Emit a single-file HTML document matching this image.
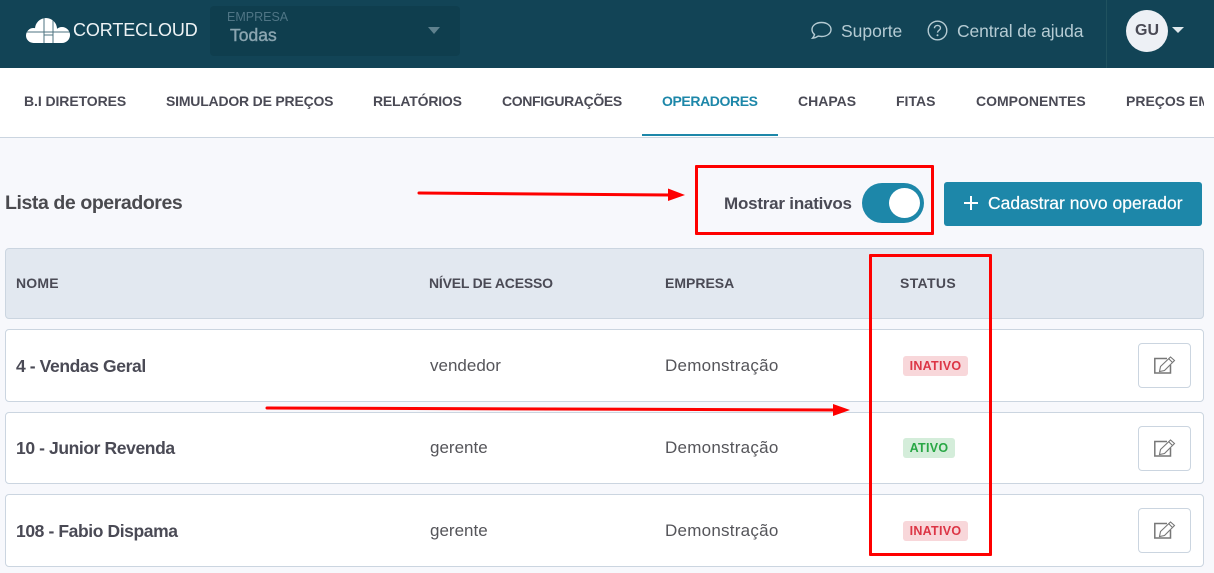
<!DOCTYPE html>
<html lang="pt-BR">
<head>
<meta charset="utf-8">
<title>Lista de operadores</title>
<style>
*{box-sizing:border-box}
html,body{margin:0;padding:0}
body{width:1214px;height:573px;position:relative;overflow:hidden;background:#f7f8fc;font-family:"Liberation Sans",sans-serif;color:#4a4a4f}
.a{position:absolute;white-space:nowrap;line-height:20px}
.b{font-weight:700}
.hdr{position:absolute;left:0;top:0;width:1214px;height:68px;background:#124456}
.nav{position:absolute;left:0;top:68px;width:1214px;height:70px;background:#fff;border-bottom:1px solid #cbd5e0;overflow:hidden}
.nv{position:absolute;top:23px;font-size:14px;font-weight:700;line-height:20px;white-space:nowrap;color:#4a4a55}
.row{position:absolute;left:5px;width:1199px;background:#fff;border:1px solid #cbd5e0;border-radius:4px}
.hd{position:absolute;left:5px;top:248px;width:1199px;height:71px;background:#e2e8f0;border:1px solid #cbd5e0;border-radius:4px}
.th{font-size:14px;font-weight:700;color:#4a4a55}
.nm{font-size:17.5px;font-weight:700;color:#4a4a55;letter-spacing:-.4px}
.td{font-size:17px;color:#55555a}
.dm{letter-spacing:.25px}
.badge{position:absolute;height:20px;border-radius:3px;font-size:12.5px;font-weight:700;line-height:20px;text-align:center;letter-spacing:.3px}
.in{background:#f8d7da;color:#dc3545;width:65px;left:903px}
.at{background:#d4edda;color:#28a745;width:52px;left:903px}
.edit{position:absolute;left:1138px;width:53px;height:45px;background:#fff;border:1px solid #cbd5e0;border-radius:4px}
.edit svg{position:absolute;left:15px;top:12px}
.rb{position:absolute;border:3px solid #fe0000;border-radius:1px}
</style>
</head>
<body>
<div class="hdr">
  <svg class="a" style="left:25px;top:17px" width="46" height="27" viewBox="0 0 46 27">
    <circle cx="8.500" cy="18.500" r="7.500" fill="#fff"/>
    <circle cx="21" cy="12" r="11" fill="#fff"/>
    <circle cx="37" cy="18" r="8" fill="#fff"/>
    <rect x="8.500" y="12" width="28.500" height="14" fill="#fff"/>
    <path d="M19 0V27M28 1V27M0 15H46M19 18H28" stroke="#124456" stroke-width="1" fill="none" opacity=".75"/>
  </svg>
  <div class="a" style="left:73px;top:20px;font-size:18px;color:#eef3f5;letter-spacing:-.1px">CORTECLOUD</div>
  <div class="a" style="left:210px;top:6px;width:250px;height:50px;background:#0f3e4e;border-radius:4px"></div>
  <div class="a" style="left:227px;top:7px;font-size:12.5px;color:#4f7585">EMPRESA</div>
  <div class="a" style="left:230px;top:25px;font-size:17.500px;color:#8aa5b0;-webkit-text-stroke:.4px #8aa5b0">Todas</div>
  <div class="a" style="left:428px;top:27px;width:0;height:0;border-left:6.500px solid transparent;border-right:6.500px solid transparent;border-top:7px solid #5f818e"></div>
  <svg class="a" style="left:810px;top:20px" width="23" height="21" viewBox="0 0 23 21"><path d="M11.500 2.500c5.500 0 9.500 3 9.500 7s-4 7-9.500 7c-1.200 0-2.300-.2-3.300-.4-1.400 1-3.200 2-5.700 2.100.9-1 1.800-2.300 2-3.800C3 13.200 2 11.500 2 9.500c0-4 4-7 9.500-7z" fill="none" stroke="#b5cbd3" stroke-width="1.400"/></svg>
  <div class="a" style="left:841px;top:21px;font-size:17.500px;color:#b5cbd3">Suporte</div>
  <svg class="a" style="left:927px;top:20px" width="21" height="21" viewBox="0 0 21 21"><circle cx="10.500" cy="10.500" r="9.300" fill="none" stroke="#b5cbd3" stroke-width="1.400"/><path d="M7.500 8.200c0-1.700 1.300-2.800 3-2.800s3 1.100 3 2.600c0 2.300-3 2.300-3 4.600" fill="none" stroke="#b5cbd3" stroke-width="1.400"/><circle cx="10.500" cy="15.300" r="1" fill="#b5cbd3"/></svg>
  <div class="a" style="left:957px;top:21px;font-size:17.500px;color:#b5cbd3;letter-spacing:-.13px">Central de ajuda</div>
  <div class="a" style="left:1106px;top:0;width:1px;height:68px;background:#20525f"></div>
  <div class="a" style="left:1126px;top:10px;width:42px;height:42px;border-radius:50%;background:#edf0f5;text-align:center;line-height:42px;font-size:16px;font-weight:700;color:#4a4a55">GU</div>
  <div class="a" style="left:1172px;top:27px;width:0;height:0;border-left:6px solid transparent;border-right:6px solid transparent;border-top:6px solid #dfe8ec"></div>
</div>

<div class="nav">
  <div class="nv" style="left:24px;letter-spacing:-.08px">B.I DIRETORES</div>
  <div class="nv" style="left:166px;letter-spacing:-.2px">SIMULADOR DE PREÇOS</div>
  <div class="nv" style="left:373px;letter-spacing:-.2px">RELATÓRIOS</div>
  <div class="nv" style="left:502px;letter-spacing:-.35px">CONFIGURAÇÕES</div>
  <div class="nv" style="left:662px;color:#1d87a9;letter-spacing:-.4px">OPERADORES</div>
  <div class="nv" style="left:798px">CHAPAS</div>
  <div class="nv" style="left:896px">FITAS</div>
  <div class="nv" style="left:976px">COMPONENTES</div>
  <div class="nv" style="left:1126px;width:78px;overflow:hidden">PREÇOS EM</div>
  <div class="a" style="left:642px;top:66px;width:136px;height:2px;background:#1d87a9"></div>
</div>

<div class="a b" style="left:5px;top:193px;font-size:19.500px;color:#4a4a4f;letter-spacing:-.42px">Lista de operadores</div>

<div class="a b" style="left:724px;top:194px;font-size:17px;color:#4a4a55;letter-spacing:-.22px">Mostrar inativos</div>
<div class="a" style="left:862px;top:183px;width:62px;height:40px;border-radius:20px;background:#1d87a9"></div>
<div class="a" style="left:889px;top:188px;width:31px;height:30px;border-radius:50%;background:#fff"></div>

<div class="a" style="left:944px;top:182px;width:258px;height:44px;background:#1d87a9;border-radius:3px"></div>
<svg class="a" style="left:963px;top:195px" width="16" height="16" viewBox="0 0 16 16"><path d="M8 1V15M1 8H15" stroke="#fff" stroke-width="2" fill="none"/></svg>
<div class="a" style="left:988px;top:193px;font-size:17.500px;color:#fff;-webkit-text-stroke:.2px #fff">Cadastrar novo operador</div>

<div class="hd"></div>
<div class="a th" style="left:16px;top:273px;letter-spacing:.2px">NOME</div>
<div class="a th" style="left:429px;top:273px;letter-spacing:-.2px">NÍVEL DE ACESSO</div>
<div class="a th" style="left:665px;top:273px">EMPRESA</div>
<div class="a th" style="left:900px;top:273px;letter-spacing:.35px">STATUS</div>

<div class="row" style="top:329px;height:73px"></div>
<div class="row" style="top:412px;height:72px"></div>
<div class="row" style="top:494px;height:73px"></div>

<div class="a nm" style="left:16px;top:356px">4 - Vendas Geral</div>
<div class="a td" style="left:430px;top:356px">vendedor</div>
<div class="a td dm" style="left:665px;top:356px">Demonstração</div>
<div class="badge in" style="top:356px">INATIVO</div>
<div class="edit" style="top:343px"><svg width="22" height="20" viewBox="0 0 22 20"><path d="M13 2.500H.8V17H16.500V9" fill="none" stroke="#777" stroke-width="1.500"/><path d="M5.500 15.500L6.500 10.500 16.500 1 20.500 4.500 10.500 14.500zM15 3L18.500 6.500" fill="#fff" stroke="#777" stroke-width="1.100"/></svg></div>

<div class="a nm" style="left:16px;top:438px">10 - Junior Revenda</div>
<div class="a td" style="left:430px;top:438px">gerente</div>
<div class="a td dm" style="left:665px;top:438px">Demonstração</div>
<div class="badge at" style="top:438px">ATIVO</div>
<div class="edit" style="top:426px"><svg width="22" height="20" viewBox="0 0 22 20"><path d="M13 2.500H.8V17H16.500V9" fill="none" stroke="#777" stroke-width="1.500"/><path d="M5.500 15.500L6.500 10.500 16.500 1 20.500 4.500 10.500 14.500zM15 3L18.500 6.500" fill="#fff" stroke="#777" stroke-width="1.100"/></svg></div>

<div class="a nm" style="left:16px;top:521px">108 - Fabio Dispama</div>
<div class="a td" style="left:430px;top:521px">gerente</div>
<div class="a td dm" style="left:665px;top:521px">Demonstração</div>
<div class="badge in" style="top:521px">INATIVO</div>
<div class="edit" style="top:508px"><svg width="22" height="20" viewBox="0 0 22 20"><path d="M13 2.500H.8V17H16.500V9" fill="none" stroke="#777" stroke-width="1.500"/><path d="M5.500 15.500L6.500 10.500 16.500 1 20.500 4.500 10.500 14.500zM15 3L18.500 6.500" fill="#fff" stroke="#777" stroke-width="1.100"/></svg></div>

<div class="rb" style="left:695px;top:165px;width:239px;height:70px"></div>
<div class="rb" style="left:869px;top:254px;width:123px;height:302px"></div>
<svg style="position:absolute;left:0;top:0" width="1214" height="573" viewBox="0 0 1214 573">
  <path d="M419 193L670 195" stroke="#fe0000" stroke-width="3" fill="none" stroke-linecap="round"/>
  <path d="M668 188.500L685 195 668 201z" fill="#fe0000"/>
  <path d="M267 408L836 410" stroke="#fe0000" stroke-width="3" fill="none" stroke-linecap="round"/>
  <path d="M833 404L850 410 833 416z" fill="#fe0000"/>
</svg>
</body>
</html>
